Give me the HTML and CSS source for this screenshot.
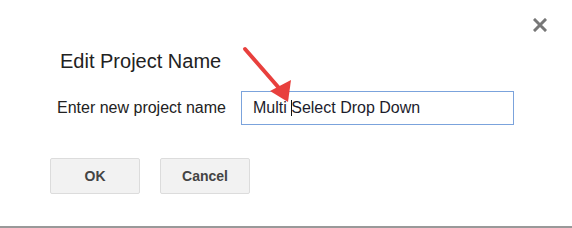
FILE: index.html
```html
<!DOCTYPE html>
<html lang="en">

<head>
    <meta charset="UTF-8">
    <meta name="viewport" content="width=device-width, initial-scale=1">
    <title>Edit Project Name</title>
    <link rel="stylesheet" href="styles.css">
</head>

<body>

    <div class="dialog">
        <!-- Close button in the corner -->
        <button class="close-button" aria-label="Close">
            <svg width="14" height="14" viewBox="0 0 14 14">
                <path d="M2 2 L12 12 M12 2 L2 12" stroke="#777" stroke-width="3" stroke-linecap="square" />
            </svg>
        </button>

        <h2 class="dialog-title">Edit Project Name</h2>

        <div class="name-row">
            <label class="name-label" for="project-name">Enter new project name</label>
            <div class="name-input" id="project-name">Multi <span class="caret"></span>Select Drop Down</div>
        </div>

        <div class="button-row">
            <button class="dialog-button">OK</button>
            <button class="dialog-button">Cancel</button>
        </div>

        <!-- Red annotation arrow over the input -->
        <svg class="annotation" width="62" height="66" viewBox="236 40 62 66">
            <line x1="245" y1="49" x2="279" y2="88" stroke="#e8403d" stroke-width="4" stroke-linecap="round" />
            <polygon points="288,102 270,91 291,80" fill="#e8403d" />
        </svg>
    </div>

</body>

</html>
```

FILE: styles.css
```css
/* Edit project name dialog */
body {
    margin: 0;
    padding: 0;
    background-color: #fff;
    font-family: Arial, 'Liberation Sans', sans-serif;
    color: #222;
}

.dialog {
    position: relative;
    height: 228px;
    box-sizing: border-box;
    border-bottom: 2px solid #999;
    padding-top: 50px;
}

.close-button {
    position: absolute;
    top: 18px;
    right: 25px;
    width: 14px;
    height: 14px;
    padding: 0;
    border: none;
    background: none;
    cursor: pointer;
}

.close-button svg {
    display: block;
}

.dialog-title {
    margin: 0;
    padding-left: 60px;
    font-size: 20px;
    font-weight: normal;
    line-height: 23px;
    color: #222;
}

/* Label and input */
.name-row {
    display: flex;
    align-items: center;
    margin-top: 18px;
    padding-left: 57px;
}

.name-label {
    flex: 0 0 184px;
    font-size: 16px;
    color: #222;
}

.name-input {
    width: 273px;
    height: 34px;
    box-sizing: border-box;
    border: 1px solid #7ba3dc;
    padding-left: 11px;
    font-size: 16px;
    line-height: 32px;
    color: #1c1c2c;
    white-space: pre;
}

.caret {
    display: inline-block;
    width: 1px;
    height: 16px;
    margin-right: -1px;
    vertical-align: -3px;
    background-color: #111;
}

/* Buttons */
.button-row {
    display: flex;
    gap: 20px;
    margin-top: 33px;
    padding-left: 50px;
}

.dialog-button {
    width: 90px;
    height: 36px;
    border: 1px solid #dcdcdc;
    border-radius: 2px;
    background-color: #f2f2f2;
    font-family: Arial, 'Liberation Sans', sans-serif;
    font-size: 14px;
    font-weight: bold;
    color: #444;
    cursor: pointer;
}

.annotation {
    position: absolute;
    left: 236px;
    top: 40px;
}
```
